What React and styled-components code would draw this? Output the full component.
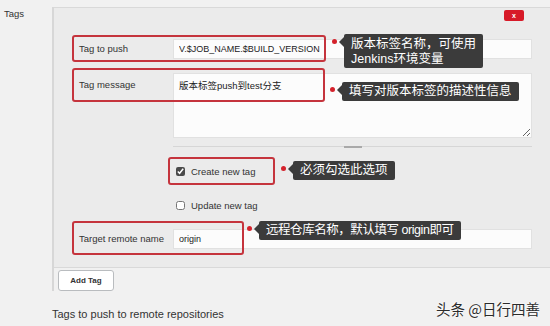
import React from 'react'
import styled, { createGlobalStyle } from 'styled-components'

const GlobalStyle = createGlobalStyle`
  html, body {
    margin: 0;
    padding: 0;
    background: #f1f1f1;
  }
  body {
    width: 550px;
    height: 326px;
    overflow: hidden;
    font-family: "Liberation Sans", "Noto Sans CJK SC", sans-serif;
    color: #333;
  }
`

const Page = styled.div`
  position: relative;
  display: grid;
  grid-template-columns: 52px 1fr;
  height: 326px;
`

const SectionLabel = styled.div`
  padding: 8px 0 0 4px;
  font-size: 9.5px;
  line-height: 12px;
  color: #333;
`

const Content = styled.div`
  display: flex;
  flex-direction: column;
`

const Bordered = styled.div`
  border-left: 2px solid #d7d7d7;
  margin-top: 7px;
`

const Panel = styled.div`
  background: #ebebeb;
  border-top: 1px solid #d9d9d9;
  border-bottom: 1px solid #d9d9d9;
  padding: 2px 18px 18px 25px;
`

const PanelHead = styled.div`
  display: flex;
  justify-content: flex-end;
  margin-bottom: 18px;
`

const DeleteButton = styled.button`
  width: 20px;
  height: 11px;
  margin-right: 8px;
  padding: 0;
  border: none;
  border-radius: 2px;
  background: #d71a28;
  color: #fff;
  font-family: "Liberation Sans", sans-serif;
  font-size: 7px;
  font-weight: bold;
  line-height: 11px;
`

const Form = styled.div`
  display: flex;
  flex-direction: column;
  gap: 14px;
`

const FieldRow = styled.div`
  position: relative;
  display: grid;
  grid-template-columns: 94px 1fr;
  align-items: ${(p) => (p.$top ? 'start' : 'center')};
`

const Label = styled.label`
  font-size: 9.5px;
  line-height: 12px;
  color: #333;
  padding-top: ${(p) => (p.$top ? '6px' : '0')};
`

const TextInput = styled.input`
  box-sizing: border-box;
  width: 100%;
  height: 20px;
  margin: 0;
  padding: 0 5px;
  border: 1px solid #e1e1e1;
  background: #fcfcfc;
  font-family: "Liberation Sans", sans-serif;
  font-size: 9px;
  color: #222;
  outline: none;
`

const AreaWrap = styled.div`
  display: flex;
  flex-direction: column;
`

const TextArea = styled.textarea`
  box-sizing: border-box;
  width: 100%;
  height: 65px;
  margin: 0;
  padding: 6px 5px;
  border: 1px solid #e1e1e1;
  background: #fcfcfc;
  font-family: "Liberation Sans", "Noto Sans CJK SC", sans-serif;
  font-size: 9.5px;
  line-height: 12px;
  color: #222;
  resize: vertical;
  outline: none;
`

const Grabber = styled.div`
  display: flex;
  justify-content: center;
  margin-top: 8px;
  height: 1px;
  background: #d6d6d6;
  &::after {
    content: '';
    width: 18px;
    height: 2px;
    margin-top: -0.5px;
    background: #a9a9a9;
  }
`

const CheckRow = styled.label`
  position: relative;
  display: flex;
  align-items: center;
  gap: 6px;
  height: 20px;
  padding-left: 97px;
  font-size: 9.5px;
  color: #333;
`

const Check = styled.input`
  width: 9px;
  height: 9px;
  margin: 0;
  accent-color: #4a4a4a;
`

const Highlight = styled.div`
  position: absolute;
  left: ${(p) => p.$x}px;
  top: ${(p) => p.$y}px;
  width: ${(p) => p.$w}px;
  height: ${(p) => p.$h}px;
  box-sizing: border-box;
  border: 2px solid #c5343d;
  border-radius: 3px;
  pointer-events: none;
`

const Callout = styled.div`
  position: absolute;
  left: ${(p) => p.$x}px;
  top: ${(p) => p.$y}px;
  display: flex;
  align-items: flex-start;
  gap: 7px;
`

const Dot = styled.span`
  width: 5px;
  height: 5px;
  margin-top: 4.5px;
  border-radius: 50%;
  background: #d4222c;
`

const Tip = styled.div`
  position: relative;
  padding: ${(p) => (p.$tall ? '3px' : '2px')} 7px 2px 7px;
  border-radius: 2px;
  background: #3b3b3b;
  color: #fff;
  font-family: "Liberation Sans", "Noto Sans CJK SC", sans-serif;
  font-size: 12.5px;
  line-height: ${(p) => (p.$tall ? '14.5px' : '15px')};
  letter-spacing: ${(p) => (p.$tight ? '-0.45px' : '0')};
  white-space: nowrap;
  &::before {
    content: '';
    position: absolute;
    left: -5px;
    top: 3px;
    border-top: 5px solid transparent;
    border-bottom: 5px solid transparent;
    border-right: 5px solid #3b3b3b;
  }
`

const AddButton = styled.button`
  width: 56px;
  height: 21px;
  margin: 2px 0 0 4px;
  padding: 0;
  border: 1px solid #b9bcbf;
  border-radius: 3px;
  background: #fff;
  color: #333;
  font-family: "Liberation Sans", sans-serif;
  font-size: 8px;
  font-weight: bold;
`

const Description = styled.div`
  margin-top: 16px;
  font-size: 11px;
  line-height: 14px;
  color: #333;
`

const Watermark = styled.div`
  position: absolute;
  right: 10px;
  top: 300px;
  font-family: "Noto Sans CJK SC", sans-serif;
  font-size: 14.5px;
  line-height: 18px;
  color: #2b2b2b;
  text-shadow: 0 0 2px #fff, 0 0 2px #fff;
  white-space: nowrap;
`

const Annotation = ({ x, y, tall, tight, children }) => (
  <Callout $x={x} $y={y}>
    <Dot />
    <Tip $tall={tall} $tight={tight}>{children}</Tip>
  </Callout>
)

export default function App() {
  return (
    <>
      <GlobalStyle />
      <Page>
        <SectionLabel>Tags</SectionLabel>
        <Content>
          <Bordered>
            <Panel>
              <PanelHead>
                <DeleteButton>x</DeleteButton>
              </PanelHead>
              <Form>
                <FieldRow>
                  <Label>Tag to push</Label>
                  <TextInput readOnly value="V.$JOB_NAME.$BUILD_VERSION" />
                  <Highlight $x={-7} $y={-4} $w={254} $h={27} />
                  <Annotation x={253} y={-5} tall>
                    版本标签名称，可使用
                    <br />
                    Jenkins环境变量
                  </Annotation>
                </FieldRow>
                <FieldRow $top>
                  <Label $top>Tag message</Label>
                  <AreaWrap>
                    <TextArea readOnly value="版本标签push到test分支" />
                    <Grabber />
                  </AreaWrap>
                  <Highlight $x={-7} $y={-5} $w={253} $h={34} />
                  <Annotation x={251} y={9}>填写对版本标签的描述性信息</Annotation>
                </FieldRow>
                <CheckRow>
                  <Check type="checkbox" defaultChecked />
                  Create new tag
                  <Highlight $x={89} $y={-4} $w={107} $h={28} />
                  <Annotation x={202} y={0}>必须勾选此选项</Annotation>
                </CheckRow>
                <CheckRow>
                  <Check type="checkbox" />
                  Update new tag
                </CheckRow>
                <FieldRow>
                  <Label>Target remote name</Label>
                  <TextInput readOnly value="origin" />
                  <Highlight $x={-7} $y={-8} $w={172} $h={34} />
                  <Annotation x={168} y={-8} tight>远程仓库名称，默认填写 origin即可</Annotation>
                </FieldRow>
              </Form>
            </Panel>
            <AddButton>Add Tag</AddButton>
          </Bordered>
          <Description>Tags to push to remote repositories</Description>
        </Content>
        <Watermark>头条 @日行四善</Watermark>
      </Page>
    </>
  )
}
